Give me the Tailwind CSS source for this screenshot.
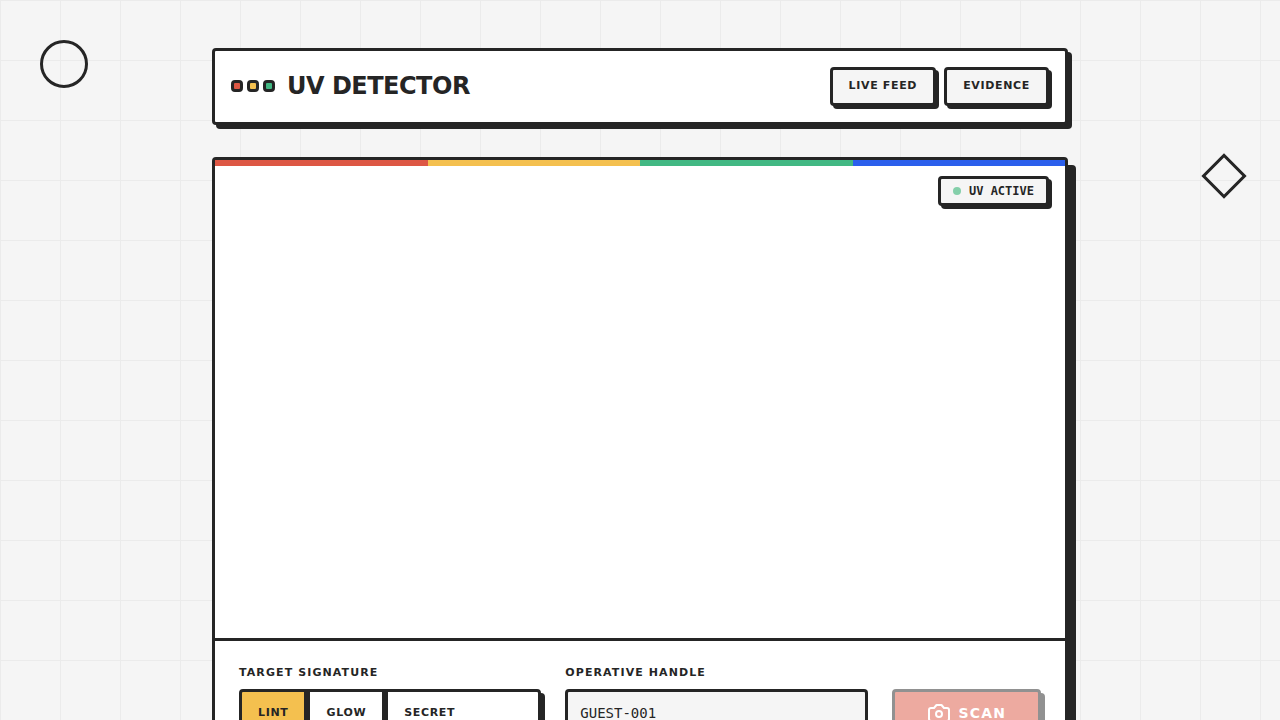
<!DOCTYPE html>
<html lang="en">
<head>
  <meta charset="UTF-8" />
  <meta name="viewport" content="width=device-width, initial-scale=1.0" />
  <title>UV Detector</title>
  <script src="https://cdn.jsdelivr.net/npm/@tailwindcss/browser@4"></script>
</head>
<body class="relative min-h-screen bg-[#f5f5f5] bg-[linear-gradient(#ebebeb_1px,transparent_1px),linear-gradient(90deg,#ebebeb_1px,transparent_1px)] bg-[size:60px_60px] font-['DejaVu_Sans',sans-serif] text-[#252525]">

  <!-- Background shapes -->
  <div class="absolute top-10 left-10 size-12 rounded-full border-3 border-[#252525]"></div>
  <div class="absolute top-40 right-10 size-8 rotate-45 border-3 border-[#252525]"></div>

  <div class="relative mx-auto flex max-w-[920px] flex-col gap-8 px-8 py-12">

    <!-- Header -->
    <header class="flex items-start justify-between rounded border-3 border-[#252525] bg-white p-4 shadow-[4px_4px_0_#252525]">
      <div class="flex h-[38px] items-center gap-3">
        <div class="flex gap-1">
          <span class="size-3 rounded border-3 border-[#252525] bg-[#dd5744]"></span>
          <span class="size-3 rounded border-3 border-[#252525] bg-[#f4c04f]"></span>
          <span class="size-3 rounded border-3 border-[#252525] bg-[#42b883]"></span>
        </div>
        <h1 class="text-2xl font-bold tracking-[-0.5px]">UV DETECTOR</h1>
      </div>
      <nav class="flex gap-2">
        <button type="button" class="rounded border-3 border-[#252525] bg-[#f5f5f5] px-4 pt-[7px] pb-[9px] text-[11px] leading-[17px] font-bold tracking-[0.06em] shadow-[3px_3px_0_#252525]">LIVE FEED</button>
        <button type="button" class="rounded border-3 border-[#252525] bg-[#f5f5f5] px-4 pt-[7px] pb-[9px] text-[11px] leading-[17px] font-bold tracking-[0.06em] shadow-[3px_3px_0_#252525]">EVIDENCE</button>
      </nav>
    </header>

    <!-- Detector -->
    <main class="rounded border-3 border-[#252525] bg-white shadow-[8px_8px_0_#252525]">
      <div class="relative aspect-video">
        <div class="grid h-[6px] grid-cols-4">
          <span class="bg-[#dd5744]"></span>
          <span class="bg-[#f4c04f]"></span>
          <span class="bg-[#42b883]"></span>
          <span class="bg-[#2b5fec]"></span>
        </div>
        <div class="absolute top-4 right-4 flex items-center gap-2 rounded border-3 border-[#252525] bg-[#f5f5f5] px-3 py-1 font-['DejaVu_Sans_Mono',monospace] text-xs font-bold shadow-[3px_3px_0_#252525]">
          <span class="size-2 rounded-full bg-[#84cfaa]"></span>
          UV ACTIVE
        </div>
      </div>

      <form class="grid grid-cols-[1fr_1fr_auto] items-start gap-6 border-t-3 border-[#252525] p-6">
        <div role="group" aria-labelledby="signature" class="flex flex-col gap-2">
          <span id="signature" class="text-[11px] leading-4 font-bold tracking-widest">TARGET SIGNATURE</span>
          <div class="flex gap-[3px] overflow-hidden rounded border-3 border-[#252525] bg-[#252525] shadow-[4px_4px_0_#252525]">
            <button type="button" aria-pressed="true" class="border-r-3 border-[#252525] bg-[#f4c04f] px-4 py-3 text-[11px] leading-[18px] font-bold tracking-[0.06em]">LINT</button>
            <button type="button" aria-pressed="false" class="border-r-3 border-[#252525] bg-white px-4 py-3 text-[11px] leading-[18px] font-bold tracking-[0.06em]">GLOW</button>
            <button type="button" aria-pressed="false" class="flex-1 bg-white px-4 py-3 text-left text-[11px] leading-[18px] font-bold tracking-[0.06em]">SECRET</button>
          </div>
        </div>

        <div class="flex flex-col gap-2">
          <label for="handle" class="text-[11px] leading-4 font-bold tracking-widest">OPERATIVE HANDLE</label>
          <input id="handle" type="text" value="GUEST-001" class="h-12 w-full rounded border-3 border-[#252525] bg-[#f5f5f5] px-3 font-['DejaVu_Sans_Mono',monospace] text-sm">
        </div>

        <button type="submit" disabled class="mt-6 flex h-12 items-center gap-2 rounded border-3 border-[#252525] bg-[#dd5744] px-8 text-sm font-bold tracking-[0.08em] text-white opacity-50 shadow-[4px_4px_0_#252525]">
          <svg class="size-6" viewBox="0 0 24 24" fill="none" stroke="currentColor" stroke-width="2" stroke-linecap="round" stroke-linejoin="round">
            <path d="M14.5 4h-5L7 7H4a2 2 0 0 0-2 2v9a2 2 0 0 0 2 2h16a2 2 0 0 0 2-2V9a2 2 0 0 0-2-2h-3l-2.5-3z" />
            <circle cx="12" cy="13" r="3" />
          </svg>
          SCAN
        </button>
      </form>
    </main>
  </div>
</body>
</html>
